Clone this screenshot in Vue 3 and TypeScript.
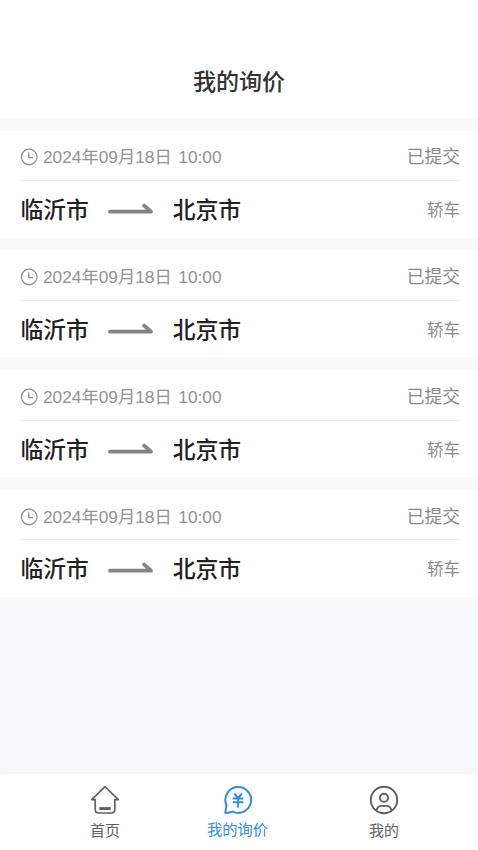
<script setup lang="ts">
interface Inquiry {
  id: number
  time: string
  status: string
  from: string
  to: string
  vehicle: string
}

const inquiries: Inquiry[] = [1, 2, 3, 4].map((id) => ({
  id,
  time: '2024年09月18日 10:00',
  status: '已提交',
  from: '临沂市',
  to: '北京市',
  vehicle: '轿车',
}))
</script>

<template>
  <div class="page">
    <header class="header">
      <h1 class="title">我的询价</h1>
    </header>

    <main class="list">
      <article v-for="item in inquiries" :key="item.id" class="card">
        <div class="card-head">
          <svg class="clock" viewBox="0 0 18 18" fill="none" stroke="currentColor">
            <circle cx="9.2" cy="9" r="7.8" stroke-width="1.2" />
            <path d="M8.8 4.5V9.6H12.9" stroke-width="1.2" />
          </svg>
          <span class="time">{{ item.time }}</span>
          <span class="status">{{ item.status }}</span>
        </div>
        <div class="card-body">
          <span class="city">{{ item.from }}</span>
          <svg class="arrow" viewBox="0 0 46 14" fill="none" stroke="currentColor">
            <path d="M2 8.7H43L36.2 2.6" stroke-width="3.8" stroke-linecap="round" stroke-linejoin="round" />
          </svg>
          <span class="city">{{ item.to }}</span>
          <span class="vehicle">{{ item.vehicle }}</span>
        </div>
      </article>
    </main>

    <nav class="tabbar">
      <a class="tab home">
        <svg class="icon" viewBox="0 0 30 30" fill="none" stroke="currentColor" stroke-linejoin="round">
          <path d="M15 1.7L1.7 14.7H5.2V24.5Q5.2 28 8.7 28H21.3Q24.8 28 24.8 24.5V14.7H28.3Z" stroke-width="1.7" />
          <path d="M9.3 23.6H20.7" stroke-width="3" />
        </svg>
        <span>首页</span>
      </a>
      <a class="tab inquiry">
        <svg class="icon" viewBox="0 0 30 30" fill="none" stroke="currentColor" stroke-linejoin="round">
          <path d="M2.3 27.9L3.4 20A12.9 12.9 0 1 1 9.8 26.6Q6.8 27.8 2.3 27.9Z" stroke-width="2" />
          <path d="M11.3 8.6L15.1 13L18.9 8.6M9.8 13.5H20.4M9.8 17.2H20.4M15.1 13V22.4" stroke-width="2" />
        </svg>
        <span>我的询价</span>
      </a>
      <a class="tab mine">
        <svg class="icon" viewBox="0 0 30 30" fill="none" stroke="currentColor">
          <circle cx="15" cy="15" r="13.2" stroke-width="1.9" />
          <circle cx="15" cy="12.8" r="4.1" stroke-width="1.9" />
          <path d="M7.3 25.5C8.2 22.4 10 20.9 13 20.9H17C20 20.9 21.8 22.4 22.7 25.5" stroke-width="1.9" />
        </svg>
        <span>我的</span>
      </a>
    </nav>
  </div>
</template>

<style>
body {
  margin: 0;
}
</style>

<style scoped>
.page {
  display: flex;
  flex-direction: column;
  box-sizing: border-box;
  height: 850px;
  overflow: hidden;
  background: #f8f9fb;
  font-family: 'Liberation Sans', 'Noto Sans CJK SC', sans-serif;
}
.header {
  box-sizing: border-box;
  height: 118px;
  padding-top: 65px;
  background: #fff;
  text-align: center;
}
.title {
  margin: 0;
  color: #333;
  font-size: 23px;
  line-height: 34px;
  font-weight: 500;
}
.list {
  display: flex;
  flex: 1;
  flex-direction: column;
  gap: 12.75px;
  padding-top: 12.6px;
}
.card {
  box-sizing: border-box;
  height: 107px;
  padding: 0 18px 0 20px;
  background: #fff;
}
.card-head {
  display: flex;
  align-items: center;
  box-sizing: border-box;
  height: 50.5px;
  padding-top: 4px;
  border-bottom: 1px solid #eeeeef;
  color: #8c8c8c;
}
.clock {
  width: 18px;
  height: 18px;
  margin-right: 5px;
}
.time {
  color: #929292;
  font-size: 17.3px;
  line-height: 24px;
  word-spacing: 1.8px;
}
.status {
  margin-left: auto;
  font-size: 17.8px;
  line-height: 24px;
}
.card-body {
  display: flex;
  align-items: center;
  height: 57px;
  padding-top: 1px;
  padding-left: 0.5px;
  box-sizing: border-box;
  color: #222;
}
.city {
  font-size: 22.8px;
  line-height: 34px;
  font-weight: 500;
}
.arrow {
  width: 46px;
  height: 14px;
  margin: 0 19px 0 18.8px;
  color: #858585;
}
.vehicle {
  margin-left: auto;
  color: #8a8a8a;
  font-size: 16.5px;
  line-height: 24px;
}
.tabbar {
  display: grid;
  grid-template-columns: 62px 86px 1fr 86px 50px;
  box-sizing: border-box;
  width: 477px;
  height: 76px;
  padding-top: 11.4px;
  background: #fff;
  box-shadow: 0 -1px 7px rgba(0, 0, 0, 0.045);
}
.tab {
  display: flex;
  flex-direction: column;
  align-items: center;
  color: #606060;
  font-size: 15px;
  line-height: 22px;
  gap: 4.6px;
}
.home {
  grid-column: 2;
}
.inquiry {
  width: 80px;
  margin-left: 49.5px;
  gap: 3.6px;
  color: #318cdf;
  font-size: 15.3px;
}
.mine {
  grid-column: 4;
}
.icon {
  width: 30px;
  height: 30px;
}
</style>
